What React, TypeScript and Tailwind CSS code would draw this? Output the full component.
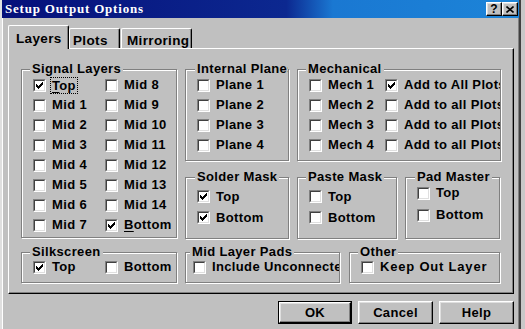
import type { ReactNode } from "react";

// Classic Win98 "Setup Output Options" dialog.
const raised =
  "border border-t-white border-l-white border-b-black border-r-black shadow-[inset_-1px_-1px_0_#808080,inset_1px_1px_0_#dfdfdf]";

function Tick() {
  return (
    <svg width="7" height="7" viewBox="0 0 7 7" shapeRendering="crispEdges">
      <path
        d="M0 2h1v3H0z M1 3h1v3H1z M2 4h1v3H2z M3 3h1v3H3z M4 2h1v3H4z M5 1h1v3H5z M6 0h1v3H6z"
        fill="#000"
      />
    </svg>
  );
}

function Box({ checked }: { checked?: boolean }) {
  return (
    <span className="flex h-[13px] w-[13px] shrink-0 border border-t-[#808080] border-l-[#808080] border-b-white border-r-white">
      <span className="flex h-full w-full items-center justify-center border border-t-[#404040] border-l-[#404040] border-b-[#dfdfdf] border-r-[#dfdfdf] bg-white">
        {checked && <Tick />}
      </span>
    </span>
  );
}

function Check({
  label,
  checked,
  focus,
  rowClass = "h-[20px]",
}: {
  label: ReactNode;
  checked?: boolean;
  focus?: boolean;
  rowClass?: string;
}) {
  return (
    <div className={`flex items-center whitespace-nowrap ${rowClass}`}>
      <Box checked={checked} />
      {focus ? (
        <span className="ml-[4px] border border-dotted border-black px-[1px] leading-[15px]">
          {label}
        </span>
      ) : (
        <span className="ml-[6px]">{label}</span>
      )}
    </div>
  );
}

function Group({
  label,
  className,
  labelClass,
  bodyClass,
  children,
}: {
  label: string;
  className: string;
  labelClass: string;
  bodyClass: string;
  children: ReactNode;
}) {
  return (
    <div
      className={`shrink-0 border border-[#808080] shadow-[inset_1px_1px_0_#fff,1px_1px_0_#fff] ${className}`}
    >
      <div
        className={`-mt-[8px] h-[14px] w-fit overflow-hidden whitespace-nowrap bg-[#c0c0c0] px-[2px] leading-[14px] ${labelClass}`}
      >
        {label}
      </div>
      <div className={`overflow-hidden ${bodyClass}`}>{children}</div>
    </div>
  );
}

function Btn({ children, def }: { children: ReactNode; def?: boolean }) {
  const inner = (
    <div className={`flex h-full w-full items-center justify-center ${raised}`}>
      {children}
    </div>
  );
  return def ? (
    <div className="h-[23px] w-[74px] border border-black">{inner}</div>
  ) : (
    <div className="h-[23px] w-[75px]">{inner}</div>
  );
}

export default function App() {
  const mids = ["Mid 1", "Mid 2", "Mid 3", "Mid 4", "Mid 5", "Mid 6", "Mid 7"];
  const right = ["Mid 8", "Mid 9", "Mid 10", "Mid 11", "Mid 12", "Mid 13", "Mid 14"];

  return (
    <div className="h-[329px] w-[525px] overflow-hidden bg-[#c8c8c8] font-['Liberation_Sans',Arial,sans-serif] text-[13px] font-bold tracking-[0.35px] text-black">
      <div className="flex h-[329px] w-[521px] flex-col border-l-2 border-r-2 border-l-[#dfdfdf] border-r-[#404040] bg-[#c0c0c0] shadow-[inset_1px_0_0_#fff,inset_-1px_0_0_#808080]">
        {/* title bar */}
        <div className="flex h-[18px] items-center bg-[linear-gradient(to_right,#06107a_0%,#0c2890_55%,#1a78d2_64%,#1c84d8_100%)] pl-[3px] pr-[1px]">
          <span className="flex-1 font-['Liberation_Serif',serif] text-[13px] font-bold tracking-[0.8px] text-white">
            Setup Output Options
          </span>
          <div className={`flex h-[14px] w-[16px] items-center justify-center bg-[#c0c0c0] text-[12px] leading-none tracking-normal ${raised}`}>
            ?
          </div>
          <div className={`flex h-[14px] w-[16px] items-center justify-center bg-[#c0c0c0] ${raised}`}>
            <svg width="8" height="7" viewBox="0 0 8 7">
              <path d="M0.5 0.5 L7.5 6.5 M7.5 0.5 L0.5 6.5" stroke="#000" strokeWidth="1.6" />
            </svg>
          </div>
        </div>

        {/* tabs */}
        <div className="relative z-10 ml-[6px] mt-[7px] flex items-end">
          <div className="-mb-[1px] h-[24px] w-[61px] rounded-t-[2px] border-l border-t border-r border-l-white border-t-white border-r-black bg-[#c0c0c0] pl-[7px] pt-[3px] text-[13.5px] shadow-[inset_-1px_0_0_#808080]">
            Layers
          </div>
          <div className="h-[20px] w-[51px] rounded-t-[2px] border-l border-t border-r border-l-white border-t-white border-r-black pl-[3px] pt-[2px] text-[13.5px] shadow-[inset_-1px_0_0_#808080]">
            Plots
          </div>
          <div className="ml-[1px] h-[20px] w-[71px] rounded-t-[2px] border-l border-t border-r border-l-white border-t-white border-r-black pl-[5px] pt-[2px] text-[13.5px] shadow-[inset_-1px_0_0_#808080]">
            Mirroring
          </div>
        </div>

        {/* tab panel */}
        <div className="ml-[6px] flex h-[246px] w-[506px] border border-t-white border-l-white border-b-black border-r-black pl-[12px] pt-[20px] shadow-[inset_-1px_-1px_0_#808080]">
          {/* left column */}
          <div className="flex flex-col">
            <Group
              label="Signal Layers"
              className="h-[169px] w-[156px]"
              labelClass="ml-[8px]"
              bodyClass="-mt-[1px] grid grid-cols-[72px_auto] pl-[11px]"
            >
              <div>
                <Check
                  checked
                  focus
                  label={
                    <>
                      <span className="underline underline-offset-2">T</span>op
                    </>
                  }
                />
                {mids.map((m) => (
                  <Check key={m} label={m} />
                ))}
              </div>
              <div>
                {right.map((m) => (
                  <Check key={m} label={m} />
                ))}
                <Check
                  checked
                  label={
                    <>
                      <span className="underline underline-offset-2">B</span>ottom
                    </>
                  }
                />
              </div>
            </Group>
            <Group
              label="Silkscreen"
              className="mt-[14px] h-[31px] w-[156px]"
              labelClass="ml-[8px]"
              bodyClass="-mt-[2px] grid grid-cols-[72px_auto] pl-[11px]"
            >
              <Check checked label="Top" />
              <Check label="Bottom" />
            </Group>
          </div>

          {/* right area */}
          <div className="ml-[8px] flex flex-col">
            <div className="flex gap-[8px]">
              <Group
                label="Internal Planes"
                className="h-[92px] w-[104px]"
                labelClass="ml-[9px] max-w-[93px]"
                bodyClass="-mt-[1px] pl-[11px]"
              >
                <Check label="Plane 1" />
                <Check label="Plane 2" />
                <Check label="Plane 3" />
                <Check label="Plane 4" />
              </Group>
              <Group
                label="Mechanical"
                className="h-[92px] w-[204px]"
                labelClass="ml-[8px]"
                bodyClass="-mt-[1px] grid grid-cols-[76px_auto] pl-[11px]"
              >
                <div>
                  <Check label="Mech 1" />
                  <Check label="Mech 2" />
                  <Check label="Mech 3" />
                  <Check label="Mech 4" />
                </div>
                <div>
                  <Check checked label="Add to All Plots" />
                  <Check label="Add to all Plots" />
                  <Check label="Add to all Plots" />
                  <Check label="Add to all Plots" />
                </div>
              </Group>
            </div>

            <div className="mt-[16px] flex gap-[8px]">
              <Group
                label="Solder Mask"
                className="h-[62px] w-[104px]"
                labelClass="ml-[9px]"
                bodyClass="pt-[2px] pl-[11px]"
              >
                <Check checked label="Top" rowClass="h-[21px]" />
                <Check checked label="Bottom" rowClass="h-[21px]" />
              </Group>
              <Group
                label="Paste Mask"
                className="h-[62px] w-[100px]"
                labelClass="ml-[8px]"
                bodyClass="pt-[2px] pl-[11px]"
              >
                <Check label="Top" rowClass="h-[21px]" />
                <Check label="Bottom" rowClass="h-[21px]" />
              </Group>
              <Group
                label="Pad Master"
                className="h-[62px] w-[95px]"
                labelClass="ml-[9px]"
                bodyClass="-mt-[2px] pl-[11px]"
              >
                <Check label="Top" rowClass="h-[22px]" />
                <Check label="Bottom" rowClass="h-[22px]" />
              </Group>
            </div>

            <div className="mt-[13px] flex gap-[9px]">
              <Group
                label="Mid Layer Pads"
                className="h-[31px] w-[155px]"
                labelClass="ml-[4px]"
                bodyClass="-mt-[2px] pl-[7px]"
              >
                <Check label="Include Unconnected" />
              </Group>
              <Group
                label="Other"
                className="h-[31px] w-[151px]"
                labelClass="ml-[8px]"
                bodyClass="-mt-[2px] pl-[11px]"
              >
                <Check label={<span className="tracking-[0.8px]">Keep Out Layer</span>} />
              </Group>
            </div>
          </div>
        </div>

        {/* buttons */}
        <div className="ml-[6px] mt-[7px] flex w-[506px] justify-end gap-[6px]">
          <Btn def>OK</Btn>
          <Btn>Cancel</Btn>
          <Btn>Help</Btn>
        </div>
      </div>
    </div>
  );
}
